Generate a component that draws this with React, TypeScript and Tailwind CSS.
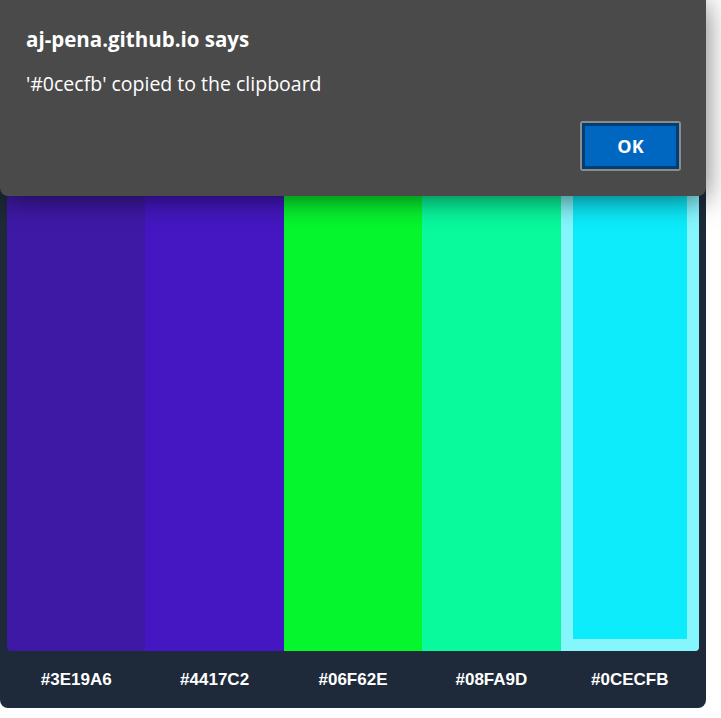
const swatches = ["#3E19A6", "#4417C2", "#06F62E", "#08FA9D", "#0CECFB"]

function Swatch({ hex, selected }: { hex: string; selected: boolean }) {
    return (
        <div
            className={`min-w-0 h-full ${selected ? "border-[12px] border-white/50" : ""}`}
            style={{ backgroundColor: hex }}
        />
    )
}

export default function App() {
    const selected = 4
    return (
        <div className="relative w-[721px] h-[718px] bg-white overflow-hidden">
            {/* Palette card */}
            <div className="w-[706px] h-[708px] bg-gray-800 rounded-b-lg flex flex-col px-[7px] pt-[7px]">
                <div className="grid grid-cols-5 flex-1 rounded-b overflow-hidden">
                    {swatches.map((hex, i) => (
                        <Swatch key={hex} hex={hex} selected={i === selected} />
                    ))}
                </div>
                <div className="h-[57px] grid grid-cols-5 items-center font-['Liberation_Sans',Arial,sans-serif] text-white text-[17px] font-bold">
                    {swatches.map((hex) => (
                        <div key={hex} className="text-center">{hex}</div>
                    ))}
                </div>
            </div>

            {/* Alert dialog */}
            <div className="absolute left-0 top-0 w-[706px] h-[196px] bg-[#4a4a4a] rounded-b-lg shadow-[0_4px_28px_rgba(0,0,0,0.55)] font-['Open_Sans','Noto_Sans',sans-serif] text-white">
                <div className="pl-[26px] pt-[24px]">
                    <h1 className="text-[20.5px] font-bold leading-[30px]">aj-pena.github.io says</h1>
                    <p className="mt-[16px] text-[19.5px] leading-[28px]">'#0cecfb' copied to the clipboard</p>
                </div>
                <div className="absolute left-[580px] top-[121px] w-[101px] h-[50px] border-2 border-[#8c8c8c] rounded-[3px]">
                    <button className="w-full h-full border-[3px] border-[#003e73] bg-[#0067c0] text-[18px] font-bold text-white">
                        OK
                    </button>
                </div>
            </div>
        </div>
    )
}
